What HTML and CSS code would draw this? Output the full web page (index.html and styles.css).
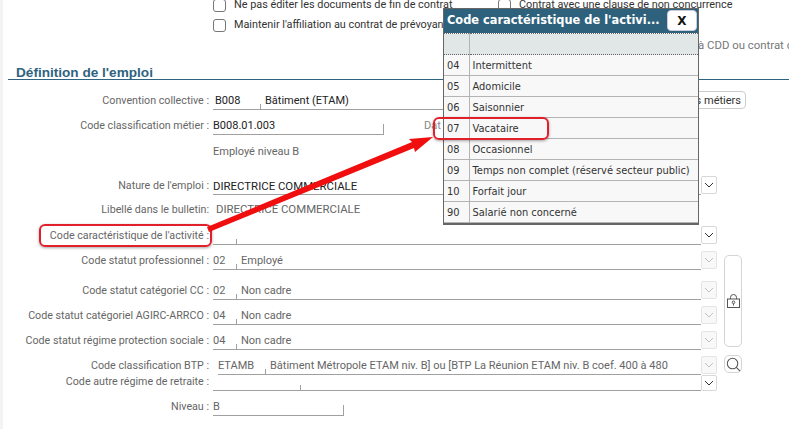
FILE: index.html
```html
<!DOCTYPE html>
<html lang="fr">
<head>
  <meta charset="UTF-8" />
  <title>Définition de l'emploi</title>
  <link rel="stylesheet" href="styles.css">
</head>
<body>
  <div class="page">
    <div class="top-options">
      <div class="option-row">
        <label class="option"><input type="checkbox"> Ne pas éditer les documents de fin de contrat</label>
        <label class="option option-right"><input type="checkbox"> Contrat avec une clause de non concurrence</label>
      </div>
      <div class="option-row">
        <label class="option"><input type="checkbox"> Maintenir l'affiliation au contrat de prévoyance</label>
      </div>
      <div class="option-note">à CDD ou contrat de</div>
    </div>

    <h2 class="section-title">Définition de l'emploi</h2>

    <div class="row h30">
      <div class="lbl">Convention collective :</div>
      <div class="field field-conv"><span class="code code-conv">B008</span><span class="val">Bâtiment (ETAM)</span></div>
      <button class="btn-metiers">s métiers</button>
    </div>
    <div class="row h25">
      <div class="lbl">Code classification métier :</div>
      <div class="field field-short field-classif"><span class="val dark">B008.01.003</span></div>
      <div class="lbl-date">Dat</div>
    </div>
    <div class="row h25 row-sub">
      <div class="lbl"></div>
      <div class="sub-text">Employé niveau B</div>
    </div>
    <div class="row h35">
      <div class="lbl">Nature de l'emploi :</div>
      <div class="field field-full"><span class="val dark caps">DIRECTRICE COMMERCIALE</span></div>
      <span class="chev on"><svg viewBox="0 0 10 6"><path d="M1 1l4 4 4-4"/></svg></span>
    </div>
    <div class="row h24">
      <div class="lbl">Libellé dans le bulletin:</div>
      <div class="plain-value caps">DIRECTRICE COMMERCIALE</div>
    </div>

    <div class="lower">
      <div class="lower-rows">
        <div class="row h26">
          <div class="lbl">Code caractéristique de l'activité :</div>
          <div class="field field-full"><span class="code"></span></div>
          <span class="chev on"><svg viewBox="0 0 10 6"><path d="M1 1l4 4 4-4"/></svg></span>
        </div>
        <div class="row h25">
          <div class="lbl">Code statut professionnel :</div>
          <div class="field field-full"><span class="code">02</span><span class="val">Employé</span></div>
          <span class="chev"><svg viewBox="0 0 10 6"><path d="M1 1l4 4 4-4"/></svg></span>
        </div>
        <div class="row h30">
          <div class="lbl">Code statut catégoriel CC :</div>
          <div class="field field-full"><span class="code">02</span><span class="val">Non cadre</span></div>
          <span class="chev"><svg viewBox="0 0 10 6"><path d="M1 1l4 4 4-4"/></svg></span>
        </div>
        <div class="row h25">
          <div class="lbl">Code statut catégoriel AGIRC-ARRCO :</div>
          <div class="field field-full"><span class="code">04</span><span class="val">Non cadre</span></div>
          <span class="chev"><svg viewBox="0 0 10 6"><path d="M1 1l4 4 4-4"/></svg></span>
        </div>
        <div class="row h25">
          <div class="lbl">Code statut régime protection sociale :</div>
          <div class="field field-full"><span class="code">04</span><span class="val">Non cadre</span></div>
          <span class="chev"><svg viewBox="0 0 10 6"><path d="M1 1l4 4 4-4"/></svg></span>
        </div>
        <div class="row h25">
          <div class="lbl">Code classification BTP :</div>
          <div class="field field-btp"><span class="code code-btp">ETAMB</span><span class="val">Bâtiment Métropole ETAM niv. B] ou [BTP La Réunion ETAM niv. B coef. 400 à 480</span></div>
          <span class="chev"><svg viewBox="0 0 10 6"><path d="M1 1l4 4 4-4"/></svg></span>
        </div>
        <div class="row h16">
          <div class="lbl">Code autre régime de retraite :</div>
          <div class="field field-full"><span class="code code-autre"></span></div>
          <span class="chev on"><svg viewBox="0 0 10 6"><path d="M1 1l4 4 4-4"/></svg></span>
        </div>
        <div class="row h25">
          <div class="lbl">Niveau :</div>
          <div class="field field-short field-niveau"><span class="val-b">B</span></div>
        </div>
      </div>
      <div class="side">
        <button class="btn-lock">
          <svg viewBox="0 0 13 14"><path d="M3.5 5V3.5a3 3 0 0 1 6 0V5"/><rect x="0.5" y="5" width="12" height="8.5"/><circle cx="6.5" cy="8.3" r="1.3"/><path d="M6.5 9.6v1.9"/></svg>
        </button>
        <button class="btn-search">
          <svg viewBox="0 0 16 16"><circle cx="7" cy="7" r="5.6"/><path d="M11 11l4 4"/></svg>
        </button>
      </div>
    </div>

    <div class="popup">
      <div class="popup-head">
        <span class="popup-title">Code caractéristique de l'activi...</span>
        <button class="popup-close">X</button>
      </div>
      <table class="popup-table">
        <tr class="head-row"><td class="c1"></td><td></td></tr>
        <tr><td class="c1">04</td><td>Intermittent</td></tr>
        <tr><td class="c1">05</td><td>Adomicile</td></tr>
        <tr><td class="c1">06</td><td>Saisonnier</td></tr>
        <tr><td class="c1">07</td><td>Vacataire</td></tr>
        <tr><td class="c1">08</td><td>Occasionnel</td></tr>
        <tr><td class="c1">09</td><td>Temps non complet (réservé secteur public)</td></tr>
        <tr><td class="c1">10</td><td>Forfait jour</td></tr>
        <tr><td class="c1">90</td><td>Salarié non concerné</td></tr>
      </table>
    </div>

    <div class="mark mark-label"></div>
    <div class="mark mark-row"></div>
    <svg class="arrow" viewBox="0 0 789 429"><polygon points="207,227 412,142 409,139 433,137 415,152 414,148 209,232"/></svg>
  </div>
</body>
</html>
```

FILE: styles.css
```css
* {
  box-sizing: border-box;
}
html, body {
  margin: 0;
  height: 100%;
  overflow: hidden;
}
body {
  background: #fff;
  font-family: Roboto, "Liberation Sans", Arial, sans-serif;
  font-size: 11px;
  color: #666;
}
.page {
  position: relative;
  width: 789px;
  height: 429px;
  overflow: hidden;
  border-left: 3px solid #f3f3f3;
}

/* top options */
.top-options {
  height: 63px;
  margin-top: -5px;
  color: #333;
}
.option-row {
  display: flex;
  height: 20px;
  padding-left: 210px;
}
.option {
  display: flex;
  align-items: center;
  gap: 8px;
  width: 285px;
  font-size: 10.85px;
  white-space: nowrap;
  line-height: 20px;
}
.option input {
  appearance: none;
  flex: none;
  width: 13px;
  height: 13px;
  margin: 0;
  background: #fff;
  border: 1px solid #777;
  border-radius: 3px;
}
.option-note {
  padding-left: 695px;
  margin-top: 1px;
  font-size: 11.4px;
  line-height: 18px;
  white-space: nowrap;
  color: #777;
}
.section-title {
  margin: 0 0 0 5px;
  height: 22px;
  padding: 7px 0 0 8px;
  font-family: "Liberation Sans", Arial, sans-serif;
  font-size: 13.6px;
  line-height: 15px;
  color: #2e6480;
  border-bottom: 1px solid #2e6480;
  white-space: nowrap;
}

/* form rows */
.row {
  display: flex;
  align-items: flex-end;
}
.h16 { height: 16px; }
.h24 { height: 24px; }
.h25 { height: 25px; }
.h26 { height: 26px; }
.h30 { height: 30px; }
.h35 { height: 35px; }
.lbl {
  flex: none;
  width: 206px;
  height: 19px;
  margin-right: 4px;
  font-size: 10.7px;
  line-height: 20px;
  text-align: right;
  white-space: nowrap;
}
.field {
  display: flex;
  align-items: flex-start;
  height: 19px;
  border-bottom: 1px solid #a0a0a0;
  white-space: nowrap;
  line-height: 20px;
}
.field-full {
  width: 488px;
}
.field-conv {
  width: 470px;
}
.field-btp {
  width: 483px;
  margin-left: 5px;
}
.field-short {
  border-right: 1px solid #a0a0a0;
  border-image: linear-gradient(to bottom, transparent 45%, #a0a0a0 45%) 1;
}
.field-classif {
  width: 171px;
}
.field-niveau {
  width: 131px;
}
.code {
  position: relative;
  flex: none;
  width: 24px;
  height: 18px;
  margin-right: 4px;
  color: #666;
}
.code::after {
  content: "";
  position: absolute;
  right: 0;
  bottom: 0;
  height: 5px;
  border-right: 1px solid #a0a0a0;
}
.code-conv {
  width: 48px;
  padding-left: 2px;
  color: #222;
}
.code-btp {
  width: 48px;
}
.code-autre {
  width: 88px;
}
.val {
  color: #666;
}
.field-conv .val, .dark {
  color: #222;
}
.caps {
  font-size: 11.4px;
}
.val-b {
  color: #666;
}
.sub-text {
  height: 17px;
  line-height: 17px;
}
.row-sub {
  align-items: flex-start;
  padding-top: 8px;
}
.plain-value {
  height: 19px;
  padding-left: 3px;
  margin-bottom: 1px;
  line-height: 20px;
}
.lbl-date {
  height: 19px;
  margin-left: 40px;
  line-height: 20px;
  color: #888;
}
.btn-metiers {
  flex: none;
  width: 63px;
  height: 18px;
  margin: 0 0 1px 0;
  padding: 0 4px 0 0;
  text-align: right;
  font: inherit;
  color: #333;
  background: #fff;
  border: 1px solid #ccc;
  border-radius: 4px;
}
.chev {
  display: flex;
  flex: none;
  align-items: center;
  justify-content: center;
  width: 16px;
  height: 18px;
  background: #f8f8f8;
  border: 1px solid #e4e4e4;
  border-radius: 2px;
  margin-bottom: 1px;
}
.chev svg {
  width: 10px;
  height: 6px;
  fill: none;
  stroke: #c0c0c0;
  stroke-width: 1;
}
.chev.on {
  background: #fff;
  border-color: #d8d8d8;
}
.chev.on svg {
  stroke: #333;
}
.h16 .chev {
  height: 16px;
  margin-bottom: 0;
}

/* lock and search column */
.lower {
  display: flex;
}
.side {
  display: flex;
  flex-direction: column;
  gap: 8px;
  margin: 36px 0 0 7px;
}
.side button {
  display: flex;
  align-items: center;
  justify-content: center;
  padding: 0;
  width: 18px;
  background: #fff;
  border: 1px solid #d4d4d4;
  border-radius: 5px;
}
.btn-lock {
  height: 92px;
}
.btn-lock svg {
  width: 13px;
  height: 14px;
  fill: none;
  stroke: #555;
  stroke-width: 1;
}
.btn-search {
  height: 18px;
}
.btn-search svg {
  width: 15px;
  height: 15px;
  fill: none;
  stroke: #555;
  stroke-width: 1.1;
}

/* popup over the form */
.popup {
  position: absolute;
  top: 8px;
  left: 440px;
  z-index: 2;
  width: 256px;
  height: 217px;
  background: #f8f8f8;
  border: 1px solid #666;
  border-bottom-width: 2px;
}
.popup-head {
  display: flex;
  justify-content: space-between;
  height: 24px;
  padding: 1px 1px 0 3px;
  background: #2e627c;
}
.popup-title {
  font-family: "DejaVu Sans", sans-serif;
  font-size: 11.4px;
  font-weight: bold;
  line-height: 21px;
  color: #fff;
  white-space: nowrap;
}
.popup-close {
  width: 30px;
  height: 21px;
  padding: 0;
  font-family: "DejaVu Sans", sans-serif;
  font-size: 12px;
  font-weight: bold;
  color: #111;
  background: #fff;
  border: 1px solid #ccd;
  border-radius: 4px;
}
.popup-table {
  width: 100%;
  border-collapse: collapse;
  table-layout: fixed;
  font-family: "DejaVu Sans", sans-serif;
  font-size: 9.9px;
  color: #333;
}
.popup-table td {
  height: 21px;
  padding: 0 0 0 3px;
  border-bottom: 1px solid #b4b4b4;
  white-space: nowrap;
}
.popup-table .c1 {
  width: 25px;
  border-right: 1px solid #b4b4b4;
}
.head-row td {
  background: #e1e7e7;
  border-top: 1px dotted #666;
  border-bottom: 1px dotted #666;
}

/* red annotations */
.mark {
  position: absolute;
  z-index: 3;
  border: 2px solid #e0202a;
  border-radius: 6px;
  box-shadow: 0 1px 3px rgba(0,0,0,0.35);
}
.mark-label {
  top: 224px;
  left: 36px;
  width: 173px;
  height: 23px;
}
.mark-row {
  top: 117px;
  left: 430px;
  width: 116px;
  height: 23px;
}
.arrow {
  position: absolute;
  top: 0;
  left: -3px;
  z-index: 3;
  width: 789px;
  height: 429px;
}
.arrow polygon {
  fill: #f00e0e;
}
```
